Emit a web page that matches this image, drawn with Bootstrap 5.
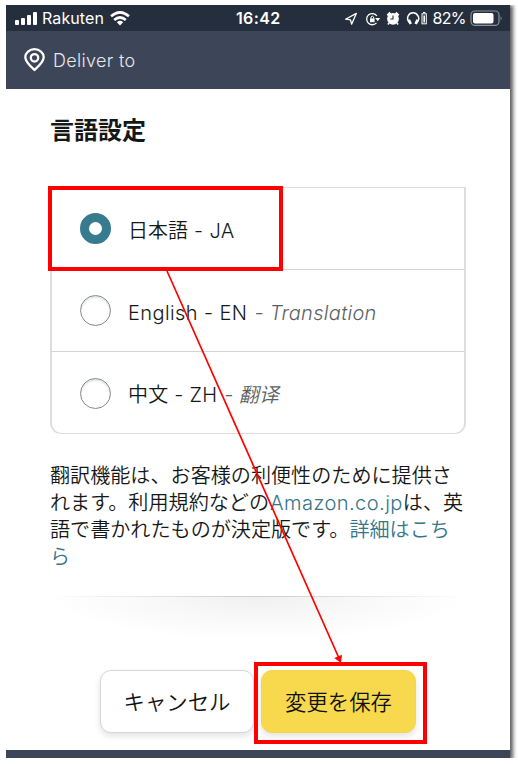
<!DOCTYPE html>
<html lang="ja">
<head>
<meta charset="utf-8">
<meta name="viewport" content="width=device-width, initial-scale=1">
<title>言語設定</title>
<link href="https://cdn.jsdelivr.net/npm/bootstrap@5.3.0/dist/css/bootstrap.min.css" rel="stylesheet">
<style>
body{font-family:Inter,"Noto Sans CJK JP",sans-serif;color:#161818;background:#fff;overflow:hidden;font-size:20px;line-height:27px}
.phone{width:504px;height:753px;margin:5px 0 0 6px;background:#fff;box-shadow:2px 1px 4px 1px rgba(0,0,0,.65);clip-path:inset(0 -8px 0 0)}
.status{height:26px;background:#242e3c;color:#fff;font-size:16px;line-height:26px;padding:0 6px 0 9px}
.status svg,.deliver svg{flex:none;display:block}
.clock{left:230px;top:0;font-weight:600;font-size:16px;letter-spacing:.35px}
.carrier{font-size:16px;margin-left:5px;margin-right:6px;letter-spacing:.1px}
.deliver{height:58px;background:#3c4658;color:#e6e8ec;padding-left:18px;font-weight:300;font-size:18px;letter-spacing:.32px}
.content{padding:0 44px 0 44px;height:661px}
.heading{font-size:24px;line-height:30px;font-weight:700;margin:0;padding-top:27px}
.langs{margin-top:41px;height:247px;border:2px solid #dcdede;border-top-width:1px;border-bottom-width:1px;border-radius:0 0 11px 11px}
.lang{height:82px;padding-left:28px;border-bottom:1px solid #d3d5d5;font-weight:350}
.lang:last-child{border:0}
.form-check-input.dial{width:31px;height:31px;margin:0 17px 0 0;border:1.4px solid #858a8a;box-shadow:inset 0 2px 2px #e2e4e4;flex:none}
.form-check-input.dial:checked{background:#fff;border:9px solid #377b8e;box-shadow:none}
.lang-text{padding-top:5px;white-space:pre}
.wide{letter-spacing:.4px}
.hint{color:#5c5f5f;font-style:italic;font-weight:350;letter-spacing:.3px;margin-left:1px}
.zh{font-family:Inter,"Noto Sans CJK SC",sans-serif;letter-spacing:.25px}
.zh .hint{letter-spacing:0}
.policy{margin-top:29px;font-weight:350;font-size:20.1px;white-space:nowrap}
.policy a{color:#357587;text-decoration:none}
.latin{letter-spacing:.42px;margin-left:1px}
.fade-rule{height:44px;margin:25px 0 0;background:radial-gradient(ellipse 50% 100% at 50% 0,#f0f0f0 0,#f8f8f8 50%,rgba(255,255,255,0) 100%)}
.fade-rule::before{content:"";display:block;height:1px;background:linear-gradient(90deg,transparent,#cfcfcf 50%,transparent)}
.actions{margin:30px 0 0 50px;gap:7px}
.action{width:154px;height:63px;padding:2px 0 0;border-radius:11px;border:1.5px solid #d5d8d9;box-shadow:0 3px 6px rgba(20,20,20,.12);font-size:21.4px;font-weight:350;color:#0f1111;background:#fff}
.action.save{width:155px;background:#f8d84c;border-color:#f5d64b}
.footer-bar{height:8px;background:#3c4658}
.outline{border:4px solid #f00;pointer-events:none}
.pick{left:48px;top:186px;width:235px;height:85px}
.target{left:254px;top:662px;width:173px;height:82px}
.arrow{left:0;top:0;pointer-events:none}
</style>
<script src="https://cdn.jsdelivr.net/npm/bootstrap@5.3.0/dist/js/bootstrap.bundle.min.js"></script>
</head>
<body>
<main class="phone">
  <div class="status d-flex align-items-center position-relative">
    <svg width="22" height="13" viewBox="0 0 22 13" fill="#fff"><rect y="8" width="4" height="5" rx="1"/><rect x="6" y="6" width="4" height="7" rx="1"/><rect x="12" y="3" width="4" height="10" rx="1"/><rect x="18" width="4" height="13" rx="1"/></svg>
    <span class="carrier">Rakuten</span>
    <svg width="20" height="15" viewBox="0 0 20 15" fill="none" stroke="#fff" stroke-width="2.7"><path d="M1 5.3Q10-2.5 19 5.3M4.2 9Q10 4 15.8 9"/><path d="M6.8 11.2Q10 8.4 13.2 11.2L10 14.5Z" fill="#fff" stroke="none"/></svg>
    <span class="clock position-absolute">16:42</span>
    <svg class="ms-auto" width="161" height="20" viewBox="343 8 161 20" fill="none" stroke="#fff" stroke-width="1.3">
      <path d="M345.6 19.2 356.3 13.4 351.6 24.2 350.5 19.8Z" stroke-linejoin="round"/>
      <path d="M376.9 16A5.6 5.6 0 1 0 376.5 22.8"/><path d="M375.2 18H380.2L377.7 21.2Z" fill="#fff" stroke="none"/><rect x="370" y="18.4" width="4.6" height="3.8" fill="#fff" stroke="none"/><path d="M371 18.5V17Q372.3 15.2 373.6 17V18.5" stroke-width="1"/>
      <circle cx="393" cy="18.8" r="5.9" fill="#fff" stroke="none"/><path d="M387.5 15.6 390.4 12.8M395.6 12.8 398.5 15.6" stroke-width="2.6"/><path d="M389 23 388 24.5M397 23 398 24.5" stroke-width="1.6"/><path d="M393 15.4V19H390.3" stroke="#242e3c" stroke-width="1.1"/>
      <path d="M409.2 22.5C405.5 17.5 409 12.8 413 12.8S421 17.5 417.2 22.5" stroke-width="1.5"/><path d="M408.8 19.7 410.7 24M417.6 19.7 415.7 24" stroke-width="2.7"/>
      <rect x="422" y="13.8" width="4.3" height="10" stroke-width="1"/><path d="M423.4 15.4H425V22.6H423.4Z" fill="#fff" stroke="none"/><path d="M423 12.5H425.4" stroke-width="1"/>
      <text x="432.5" y="24.3" font-size="16" fill="#fff" stroke="none" textLength="34">82%</text>
      <rect x="471" y="11" width="28" height="14.4" rx="4" stroke="#8d929a" stroke-width="1.2"/><rect x="473" y="13" width="20.5" height="10.4" rx="2" fill="#fff" stroke="none"/><path d="M500.6 16V20.6Q502.6 18.3 500.6 16" fill="#8d929a" stroke="none"/>
    </svg>
  </div>
  <header class="deliver d-flex align-items-center">
    <svg width="21" height="24" viewBox="0 0 21 24" fill="none" stroke="#fff" stroke-width="2.3"><path d="M10.5 22C7.8 19.3 1.3 14 1.3 9.2A9.2 8 0 0 1 19.7 9.2C19.7 14 13.2 19.3 10.5 22Z" stroke-linejoin="round"/><circle cx="10.5" cy="9.8" r="3.7"/></svg>
    <span class="ms-2">Deliver to</span>
  </header>
  <section class="content">
    <h1 class="heading">言語設定</h1>
    <div class="langs">
      <label class="lang d-flex align-items-center"><input class="form-check-input dial" type="radio" name="lang" checked><span class="lang-text">日本語<span class="wide"> - JA</span></span></label>
      <label class="lang d-flex align-items-center"><input class="form-check-input dial" type="radio" name="lang"><span class="lang-text wide">English - EN <span class="hint">- Translation</span></span></label>
      <label class="lang d-flex align-items-center"><input class="form-check-input dial" type="radio" name="lang"><span class="lang-text zh">中文 - ZH <span class="hint">- 翻译</span></span></label>
    </div>
    <p class="policy mb-0">翻訳機能は、お客様の利便性のために提供さ<br>れます。利用規約などの<a class="latin" href="#">Amazon.co.jp</a>は、英<br>語で書かれたものが決定版です。<a href="#">詳細はこち<br>ら</a></p>
    <div class="fade-rule"></div>
    <div class="actions d-flex">
      <button class="btn action" type="button">キャンセル</button>
      <button class="btn action save" type="button">変更を保存</button>
    </div>
  </section>
  <div class="footer-bar"></div>
</main>
<div class="outline pick position-absolute"></div>
<div class="outline target position-absolute"></div>
<svg class="arrow position-absolute" width="518" height="764" viewBox="0 0 518 764"><path d="M167 271 338.5 657" stroke="#f00" stroke-width="1.7"/><path d="M341 663 334.3 658 342 654.7Z" fill="#f00"/></svg>
</body>
</html>
